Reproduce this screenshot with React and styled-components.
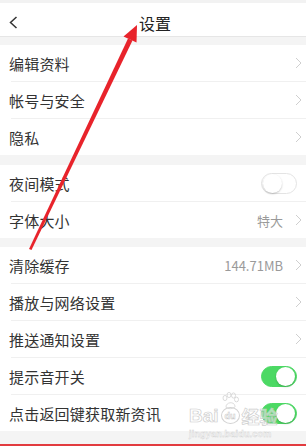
import React from "react";
import styled, { createGlobalStyle } from "styled-components";

const GlobalStyle = createGlobalStyle`
  html, body {
    margin: 0;
    padding: 0;
    background: #fff;
  }
  body {
    font-family: "Noto Sans CJK SC", "Noto Sans", sans-serif;
  }
`;

const Page = styled.div`
  position: relative;
  width: 306px;
  height: 447px;
  overflow: hidden;
  background: #f4f4f4;
  display: flex;
  flex-direction: column;
`;

const StatusStrip = styled.div`
  height: 3px;
  background: #f2f2f2;
`;

const Header = styled.header`
  height: 27px;
  padding-top: 6px;
  background: #fff;
  border-bottom: 1px solid #e6e6e6;
  display: grid;
  grid-template-columns: 44px 1fr 44px;
  align-items: center;
`;

const BackButton = styled.div`
  display: flex;
  align-items: center;
  padding-left: 9px;
  height: 100%;
`;

const Title = styled.h1`
  margin: 0;
  text-align: center;
  font-size: 16px;
  font-weight: 400;
  color: #222;
  line-height: 1;
  padding-left: 4px;
`;

const Section = styled.section`
  margin-top: ${({ $gap }) => $gap}px;
  background: #fff;
  display: flex;
  flex-direction: column;
`;

const Row = styled.div`
  height: 36px;
  display: flex;
  align-items: center;
  padding: 0 4px 0 9px;
`;

const Divider = styled.div`
  height: 1px;
  margin-left: 11px;
  background: #f0f0f0;
`;

const Label = styled.span`
  flex: 1;
  font-size: 15px;
  color: #333;
  letter-spacing: 0.2px;
`;

const Value = styled.span`
  font-size: 13px;
  color: #9a9a9a;
  margin-right: 12px;
`;

const Switch = styled.div`
  width: 36px;
  height: 21px;
  box-sizing: border-box;
  border-radius: 11px;
  margin-right: 5px;
  padding: 1px;
  display: flex;
  align-items: center;
  justify-content: ${({ $on }) => ($on ? "flex-end" : "flex-start")};
  background: ${({ $on }) => ($on ? "#4cd964" : "#fff")};
  border: 1px solid ${({ $on }) => ($on ? "#4cd964" : "#e4e4e4")};
`;

const Knob = styled.div`
  width: 19px;
  height: 19px;
  border-radius: 50%;
  background: #fff;
  box-shadow: 0 1px 2px rgba(0, 0, 0, 0.22);
`;

const Bottom = styled.div`
  margin-top: 13px;
  height: 2px;
  background: #e23b3f;
`;

const Fill = styled.div`
  flex: 1;
  background: #fff;
`;

const Overlay = styled.svg`
  position: absolute;
  left: 0;
  top: 0;
  pointer-events: none;
`;

const Watermark = styled.div`
  position: absolute;
  left: 189px;
  top: 392px;
  width: 92px;
  opacity: 0.9;
  color: #fff;
  font-family: "Liberation Sans", Arial, sans-serif;
  pointer-events: none;
`;

const MarkRow = styled.div`
  display: flex;
  align-items: center;
  gap: 2px;
  margin-top: 14px;
`;

const MarkText = styled.span`
  font-size: ${({ $cjk }) => ($cjk ? 18 : 19)}px;
  font-weight: 700;
  line-height: 1;
  color: rgba(255, 255, 255, 0.6);
  -webkit-text-stroke: 0.7px #c9c9c9;
  font-family: ${({ $cjk }) =>
    $cjk ? '"Noto Sans CJK SC", sans-serif' : '"Liberation Sans", Arial, sans-serif'};
`;

const MarkBadge = styled.span`
  width: 17px;
  height: 15px;
  border-radius: 50%;
  border: 1px solid #cfcfcf;
  font-size: 9px;
  font-weight: 700;
  display: flex;
  align-items: center;
  justify-content: center;
  color: rgba(255, 255, 255, 0.7);
  -webkit-text-stroke: 0.5px #c4c4c4;
`;

const MarkUrl = styled.div`
  font-size: 9px;
  font-weight: 700;
  color: rgba(255, 255, 255, 0.6);
  -webkit-text-stroke: 0.4px #cfcfcf;
  margin-top: 4px;
  letter-spacing: 0.2px;
`;

const Paw = styled.svg`
  position: absolute;
  left: 31px;
  top: 0;
`;

const BackIcon = () => (
  <svg width="9" height="13" viewBox="0 0 9 13">
    <polyline points="7.5,1 1.5,6.5 7.5,12" fill="none" stroke="#333" strokeWidth="1.5" />
  </svg>
);

const Chevron = () => (
  <svg width="7" height="12" viewBox="0 0 7 12">
    <polyline points="1,1 6,6 1,11" fill="none" stroke="#cfcfcf" strokeWidth="1" />
  </svg>
);

const Toggle = ({ on }) => (
  <Switch $on={on}>
    <Knob />
  </Switch>
);

const Item = ({ label, value, arrow, toggle }) => (
  <Row>
    <Label>{label}</Label>
    {value && <Value>{value}</Value>}
    {arrow && <Chevron />}
    {toggle !== undefined && <Toggle on={toggle} />}
  </Row>
);

const List = ({ items, gap }) => (
  <Section $gap={gap}>
    {items.map((item, i) => (
      <React.Fragment key={item.label}>
        {i > 0 && <Divider />}
        <Item {...item} />
      </React.Fragment>
    ))}
  </Section>
);

const groups = [
  {
    gap: 8,
    items: [
      { label: "编辑资料", arrow: true },
      { label: "帐号与安全", arrow: true },
      { label: "隐私", arrow: true },
    ],
  },
  {
    gap: 10,
    items: [
      { label: "夜间模式", toggle: false },
      { label: "字体大小", value: "特大", arrow: true },
    ],
  },
  {
    gap: 9,
    items: [
      { label: "清除缓存", value: "144.71MB", arrow: true },
      { label: "播放与网络设置", arrow: true },
      { label: "推送通知设置", arrow: true },
      { label: "提示音开关", toggle: true },
      { label: "点击返回键获取新资讯", toggle: true },
    ],
  },
];

// red pointer drawn over the page
const Arrow = () => (
  <Overlay width="306" height="447" viewBox="0 0 306 447">
    <polygon points="29,249 31.5,250 132.5,40.5 128,38.5" fill="#e8232b" />
    <polygon points="137,25 123.5,36.5 136.5,42.5" fill="#e8232b" />
  </Overlay>
);

export default function App() {
  return (
    <>
      <GlobalStyle />
      <Page>
        <StatusStrip />
        <Header>
          <BackButton>
            <BackIcon />
          </BackButton>
          <Title>设置</Title>
          <div />
        </Header>
        {groups.map((g, i) => (
          <List key={i} gap={g.gap} items={g.items} />
        ))}
        <Bottom />
        <Fill />
        <Arrow />
        <Watermark>
          <Paw width="20" height="18" viewBox="0 0 20 18">
            <g fill="none" stroke="#cfcfcf" strokeWidth="0.8">
              <ellipse cx="5" cy="6" rx="2" ry="2.6" />
              <ellipse cx="9" cy="3" rx="2" ry="2.6" />
              <ellipse cx="13.5" cy="3.5" rx="2" ry="2.6" />
              <ellipse cx="16.5" cy="7.5" rx="2" ry="2.4" />
              <path d="M6 15 C6 10 14 9 15 14 C15.5 17 6.5 17.5 6 15 Z" />
            </g>
          </Paw>
          <MarkRow>
            <MarkText>Bai</MarkText>
            <MarkBadge>du</MarkBadge>
            <MarkText $cjk>经验</MarkText>
          </MarkRow>
          <MarkUrl>jingyan.baidu.com</MarkUrl>
        </Watermark>
      </Page>
    </>
  );
}
